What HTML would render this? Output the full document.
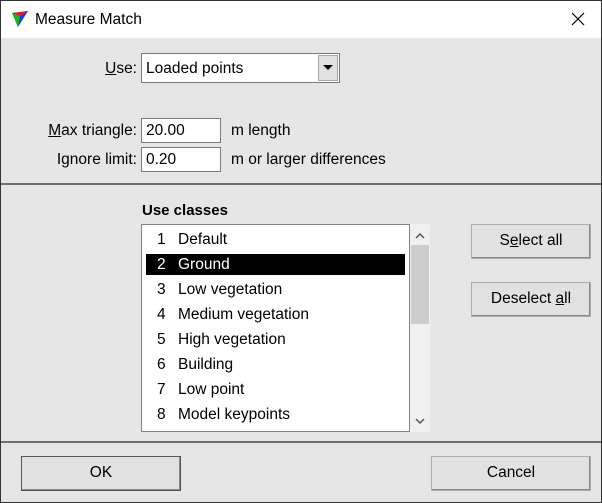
<!DOCTYPE html>
<html><head><style>
*{margin:0;padding:0;box-sizing:border-box}
body{width:602px;height:503px;background:#e6e6e6;font-family:"Liberation Sans",sans-serif;font-size:15.5px;color:#000;position:relative;overflow:hidden}
.a{position:absolute}
.win{left:0;top:0;width:602px;height:503px;border:1px solid #333}
.title{left:1px;top:1px;width:600px;height:37px;background:#fff}
.lbl{white-space:nowrap}
.r{text-align:right;width:137px;left:0}
.edit{background:#fff;border:1px solid #7a7a7a;padding:3px 4px}
.btn{background:#e1e1e1;border:1px solid #adadad;box-shadow:inset -1px -1px 0 #888;text-align:center;line-height:32px}
.sep{left:1px;width:600px;height:2px;background:#6f6f6f}
.item{left:146px;width:259px;height:21px;line-height:21px}
.item span{position:absolute;left:11px}
.item b{font-weight:normal;position:absolute;left:32px}
u{text-decoration:underline}
</style></head><body>
<div class="a win"></div>
<div class="a title"></div>
<svg class="a" style="left:11px;top:10px" width="18" height="18" viewBox="0 0 18 18"><polygon points="1,3 17,1 7,17" fill="#1a3fe0"/><polygon points="1,3 9,6 7,17" fill="#18b818"/><polygon points="1,3 17,1 9,6" fill="#e02020"/></svg>
<div class="a lbl" style="left:35px;top:11px;font-size:15.5px">Measure Match</div>
<svg class="a" style="left:571px;top:12px" width="14" height="14"><path d="M1 1L13 13M13 1L1 13" stroke="#000" stroke-width="1.2"/></svg>

<div class="a lbl r" style="top:60px"><u>U</u>se:</div>
<div class="a edit" style="left:141px;top:53px;width:199px;height:30px;padding-top:6px">Loaded points</div>
<div class="a" style="left:318px;top:55px;width:20px;height:26px;background:#e1e1e1;border:1px solid #aaa"></div>
<svg class="a" style="left:323px;top:65px" width="10" height="6"><polygon points="0,0 10,0 5,5" fill="#000"/></svg>

<div class="a lbl r" style="top:122px"><u>M</u>ax triangle:</div>
<div class="a edit" style="left:141px;top:118px;width:80px;height:25px">20.00</div>
<div class="a lbl" style="left:231px;top:122px">m length</div>
<div class="a lbl r" style="top:151px">Ignore limit:</div>
<div class="a edit" style="left:141px;top:147px;width:80px;height:25px">0.20</div>
<div class="a lbl" style="left:231px;top:151px">m or larger differences</div>

<div class="a sep" style="top:183px"></div>

<div class="a lbl" style="left:142px;top:202px;font-weight:bold;font-size:15px">Use classes</div>
<div class="a" style="left:141px;top:224px;width:269px;height:208px;background:#fff;border:1px solid #828282"></div>
<div class="a" style="left:410px;top:224px;width:20px;height:208px;background:#f0f0f0"></div>
<div class="a" style="left:411px;top:245px;width:18px;height:79px;background:#cdcdcd"></div>
<svg class="a" style="left:415px;top:232px" width="10" height="7"><path d="M1 6L5 2L9 6" stroke="#555" stroke-width="1.5" fill="none"/></svg>
<svg class="a" style="left:415px;top:418px" width="10" height="7"><path d="M1 1L5 5L9 1" stroke="#555" stroke-width="1.5" fill="none"/></svg>

<div class="a item" style="top:229px"><span>1</span><b>Default</b></div>
<div class="a item" style="top:254px;background:#000;color:#fff"><span>2</span><b>Ground</b></div>
<div class="a item" style="top:279px"><span>3</span><b>Low vegetation</b></div>
<div class="a item" style="top:304px"><span>4</span><b>Medium vegetation</b></div>
<div class="a item" style="top:329px"><span>5</span><b>High vegetation</b></div>
<div class="a item" style="top:354px"><span>6</span><b>Building</b></div>
<div class="a item" style="top:379px"><span>7</span><b>Low point</b></div>
<div class="a item" style="top:404px"><span>8</span><b>Model keypoints</b></div>

<div class="a btn" style="left:471px;top:224px;width:120px;height:35px">S<u>e</u>lect all</div>
<div class="a btn" style="left:471px;top:282px;width:120px;height:35px">Deselect <u>a</u>ll</div>

<div class="a sep" style="top:441px"></div>

<div class="a btn" style="left:21px;top:456px;width:160px;height:35px;border-color:#555">OK</div>
<div class="a btn" style="left:431px;top:456px;width:160px;height:35px">Cancel</div>
</body></html>
